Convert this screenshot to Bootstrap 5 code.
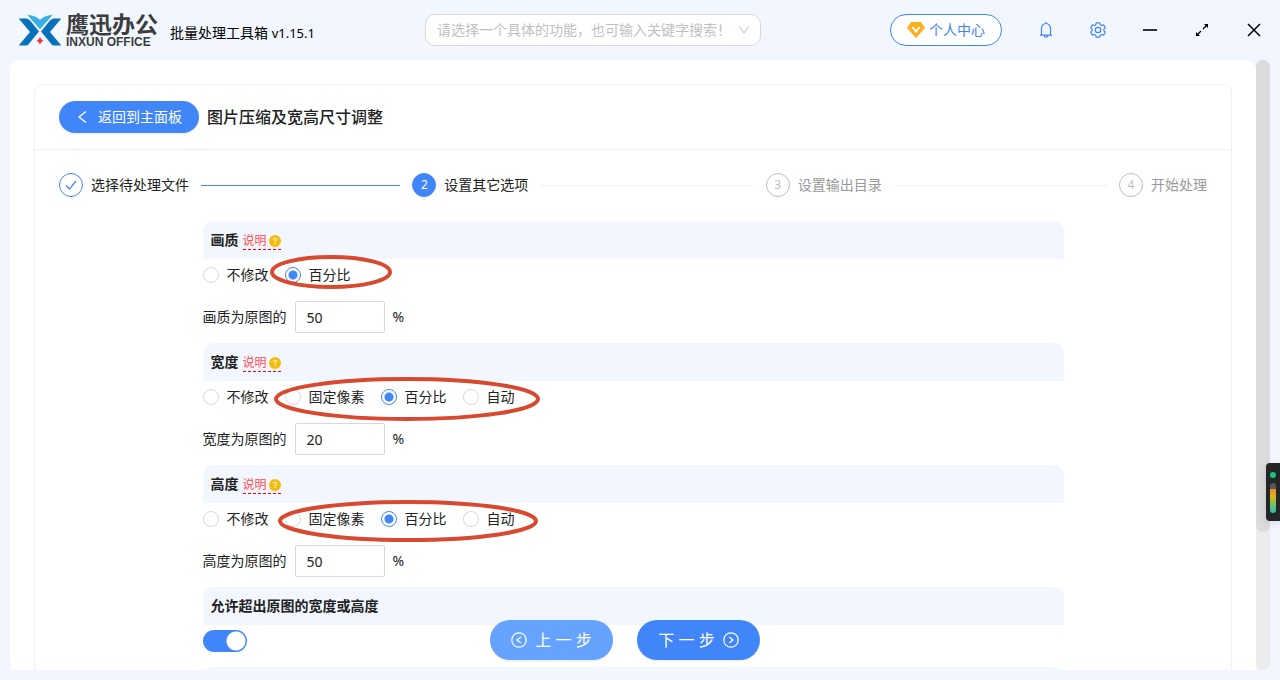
<!DOCTYPE html>
<html lang="zh-CN">
<head>
<meta charset="utf-8">
<meta name="viewport" content="width=device-width, initial-scale=1">
<title>鹰迅办公 批量处理工具箱</title>
<link href="https://cdn.jsdelivr.net/npm/bootstrap@5.3.0/dist/css/bootstrap.min.css" rel="stylesheet">
<style>
:root { --brand: #4086f9; --tint: #f2f7ff; --line: #f0f0f0; }
body { font-family: "Noto Sans", "Noto Sans CJK SC", sans-serif; font-size: 14px; line-height: 22px; color: #222; background: var(--tint); }
button, input, select { font: inherit; }
svg { display: block; flex: none; }

/* top bar */
.topbar { height: 60px; flex: none; }
.brand-area { flex: 0 0 425px; padding-left: 18px; }
.brand-name { font-size: 23px; line-height: 24px; font-weight: 700; color: #3c3c3c; }
.brand-sub { font-family: "Liberation Sans", sans-serif; font-size: 12px; line-height: 12px; font-weight: 700; color: #3c3c3c; }
.app-title { color: #000; margin-left: 10px; margin-top: 6px; }
.app-title span { font-size: 13px; }
.finder { flex: 0 1 336px; }
.finder select { height: 32px; border: 1px solid #d9d9d9; border-radius: 10px; color: #bfbfbf; background: #fff; padding: 0 28px 0 11px; appearance: none; }
.finder svg { right: 11px; top: 10px; pointer-events: none; }
.btn-user { height: 32px; border: 1px solid var(--brand); border-radius: 16px; color: var(--brand); background: #fff; padding: 0 16px; margin-right: 18px; }
.tool { width: 52px; height: 32px; border: 0; background: none; padding: 0; color: #000; }
.tool.tinted { color: var(--brand); }

/* scrolling panel */
.stage { padding: 0 10px 10px; min-height: 0; }
.sheet { background: #fff; border-radius: 10px 10px 0 0; padding: 24px 24px 0; min-width: 0; }
.panel { border: 1px solid var(--line); border-radius: 8px; }
.panel-top { padding: 16px 24px; border-bottom: 1px solid var(--line); }
.panel-main { padding: 23px 24px; }
.panel-title { font-size: 16px; line-height: 24px; font-weight: 500; }
.track { width: 14px; flex: none; background: #ececec; border-radius: 7px; }
.thumb { height: 77.3%; background: #dcdcdc; border-radius: 7px; }
.btn-main { border: 0; color: #fff; background: var(--brand); border-radius: 20px; box-shadow: 0 2px 0 rgba(0,0,0,.045); }
.btn-back { height: 32px; width: 140px; }
.btn-step { height: 40px; width: 123px; font-size: 16px; }
.btn-step.prev { background: #66a3ff; }
.pager { bottom: 20px; gap: 24px; padding-right: 30px; }

/* steps */
.step { gap: 12px; padding-right: 12px; color: #222; }
.step::after { content: ""; flex: 1; height: 1px; background: var(--line); }
.step:last-child { padding-right: 0; }
.step:last-child::after { display: none; }
.step.done::after { background: var(--brand); }
.step.wait { color: #999; }
.step-dot { width: 24px; height: 24px; border: 1px solid #bfbfbf; border-radius: 50%; color: #bfbfbf; }
.step.done .step-dot { border-color: var(--brand); color: var(--brand); }
.step.now .step-dot { border-color: var(--brand); background: var(--brand); color: #fff; }
.step-dot span { font-size: 12px; }

/* option groups */
.group-head { height: 38px; background: var(--tint); border-radius: 10px 10px 0 0; padding: 0 8px; font-weight: 600; gap: 4px; }
.hint { color: #ff4d4f; font-size: 12px; line-height: 16px; font-weight: 400; padding-top: 2px; border-bottom: 1px dashed #f00; text-decoration: none; gap: 2px; }
.line-row { height: 32px; margin-bottom: 10px; gap: 8px; }
.choices { gap: 16px; }
.choice { gap: 8px; }
.choice input { appearance: none; width: 16px; height: 16px; margin: 0; border: 1px solid #d9d9d9; border-radius: 50%; background: #fff; }
.choice input:checked { border-color: var(--brand); background: radial-gradient(circle, var(--brand) 4px, transparent 5px) #fff; }
.num { width: 90px; height: 32px; border: 1px solid #d9d9d9; border-radius: 2px; padding: 0 11px; color: #222; }
.toggle { appearance: none; width: 44px; height: 22px; margin: 0; border-radius: 11px; background: radial-gradient(circle at 33px 11px, #fff 9px, transparent 10px) var(--brand); }
.ring { fill: none; stroke: #d84a2f; stroke-width: 4; }
.ring-svg { pointer-events: none; overflow: visible; left: 0; top: 0; }

/* floating level meter */
.meter { right: 0; top: 463px; width: 14px; height: 58px; background: #242525; border-radius: 4px 0 0 4px; padding: 9px 4px 8px; box-shadow: 0 2px 8px rgba(90,90,180,.2); }
.meter i { width: 6px; height: 6px; border-radius: 50%; background: #14c977; }
.meter b { width: 6px; height: 30px; border-radius: 3px; background: linear-gradient(#55555c 6px, #f0892c 6px, #d9b31d 14px, #6bc06a 22px, #2bb9c4); }
</style>
</head>
<body class="vh-100 overflow-hidden d-flex flex-column">
<header class="topbar d-flex align-items-center">
  <div class="brand-area d-flex align-items-center">
    <svg width="44" height="32" viewBox="0 0 44 32" aria-hidden="true">
      <path fill="#0871b9" d="M.7 4.500H8.500Q11 5 12.500 7L21 17.500L9.500 31.500H.7L12 18Z"/>
      <path fill="#0871b9" d="M43.300 4.500H35.500Q33 5 31.500 7L23 17.500L34.500 31.500H43.300L32 18Z"/>
      <path fill="#35aee2" stroke="#f2f7ff" stroke-width=".6" d="M8.500 .5Q17 .8 22 5.500Q27 .8 35.500 .5Q33 2 31.500 5L22 15.500L12.500 5Q11 2 8.500 .5Z"/>
      <path fill="#e8383d" d="M22 22.500Q22.700 26 26 26.700Q22.700 27.500 22 31Q21.300 27.500 18 26.700Q21.300 26 22 22.500Z"/>
    </svg>
    <div class="ms-1 text-nowrap">
      <div class="brand-name">鹰迅办公</div>
      <div class="brand-sub">INXUN OFFICE</div>
    </div>
    <div class="app-title text-nowrap ms-2 ps-1">批量处理工具箱 <span>v1.15.1</span></div>
  </div>
  <div class="finder position-relative">
    <select class="w-100" aria-label="功能搜索"><option>请选择一个具体的功能，也可输入关键字搜索！</option></select>
    <svg class="position-absolute" width="12" height="12" viewBox="0 0 12 12" fill="none" stroke="#bfbfbf"><path d="M1 2L6 9L11 2"/></svg>
  </div>
  <div class="ms-auto d-flex align-items-center">
    <button class="btn-user d-flex align-items-center gap-1 text-nowrap">
      <svg width="18" height="16" viewBox="0 0 18 16"><path fill="#fdae1c" d="M4 0H14L18 6L9 16L0 6Z"/><path d="M5.500 5L9 9.500L12.500 5" fill="none" stroke="#fff" stroke-width="2"/></svg>
      个人中心
    </button>
    <button class="tool tinted d-flex align-items-center justify-content-center" aria-label="通知">
      <svg width="14" height="16" viewBox="0 0 14 16" fill="none" stroke="currentColor" stroke-width="1.200"><path d="M7 0V1.500M2.500 13V6.500A4.500 5 0 0 1 11.500 6.500V13M1 13.200H13M5 13.500Q5.500 15.200 7 15.200T9 13.500"/></svg>
    </button>
    <button class="tool tinted d-flex align-items-center justify-content-center" aria-label="设置">
      <svg width="16" height="16" viewBox="0 0 16 16" fill="none" stroke="currentColor" stroke-width="1.200" stroke-linejoin="round"><path d="M6.200 .8H9.800L10.300 2.800L11.600 3.500L13.600 2.900L15.300 5.800L13.900 7.200V8.800L15.300 10.200L13.600 13.100L11.600 12.500L10.300 13.200L9.800 15.200H6.200L5.700 13.200L4.400 12.500L2.400 13.100L.7 10.200L2.100 8.800V7.200L.7 5.800L2.400 2.900L4.400 3.500L5.700 2.800Z"/><circle cx="8" cy="8" r="2.700"/></svg>
    </button>
    <button class="tool d-flex align-items-center justify-content-center" aria-label="最小化">
      <svg width="14" height="14" viewBox="0 0 14 14"><path d="M0 7H14" stroke="currentColor" stroke-width="1.600"/></svg>
    </button>
    <button class="tool d-flex align-items-center justify-content-center" aria-label="最大化">
      <svg width="14" height="14" viewBox="0 0 14 14"><path d="M8 6L11.500 2.500M6 8L2.500 11.500" stroke="currentColor" stroke-width="1.300"/><path d="M9 1H13V5ZM1 9V13H5Z"/></svg>
    </button>
    <button class="tool d-flex align-items-center justify-content-center" aria-label="关闭">
      <svg width="14" height="14" viewBox="0 0 14 14"><path d="M1 1L13 13M13 1L1 13" stroke="currentColor" stroke-width="1.500"/></svg>
    </button>
  </div>
</header>

<main class="stage flex-grow-1 d-flex position-relative">
  <div class="sheet flex-grow-1 overflow-hidden">
    <div class="panel">
      <div class="panel-top d-flex align-items-center gap-2">
        <button class="btn-main btn-back d-flex align-items-center justify-content-center gap-2">
          <svg width="14" height="14" viewBox="0 0 14 14" fill="none" stroke="currentColor" stroke-width="1.300"><path d="M10 1.500L3 7L10 12.500"/></svg>
          返回到主面板
        </button>
        <h1 class="panel-title m-0">图片压缩及宽高尺寸调整</h1>
      </div>
      <div class="panel-main">
        <div class="d-flex text-nowrap">
          <div class="step done d-flex align-items-center flex-fill w-25"><div class="d-flex align-items-center gap-2"><div class="step-dot d-flex align-items-center justify-content-center"><svg width="12" height="12" viewBox="0 0 12 12" fill="none" stroke="currentColor" stroke-width="1.200"><path d="M1 6.500L4.500 10L11 2"/></svg></div>选择待处理文件</div></div>
          <div class="step now d-flex align-items-center flex-fill w-25"><div class="d-flex align-items-center gap-2"><div class="step-dot d-flex align-items-center justify-content-center"><span>2</span></div>设置其它选项</div></div>
          <div class="step wait d-flex align-items-center flex-fill w-25"><div class="d-flex align-items-center gap-2"><div class="step-dot d-flex align-items-center justify-content-center"><span>3</span></div>设置输出目录</div></div>
          <div class="step wait d-flex align-items-center"><div class="d-flex align-items-center gap-2"><div class="step-dot d-flex align-items-center justify-content-center"><span>4</span></div>开始处理</div></div>
        </div>

        <form class="w-75 mx-auto mt-4">
          <section>
            <div class="group-head d-flex align-items-center">画质 <a href="#" class="hint d-flex align-items-center">说明<svg width="12" height="12" viewBox="0 0 12 12"><circle cx="6" cy="6" r="6" fill="#f5bd0b"/><path d="M4.300 4.700Q4.300 3.200 6 3.200T7.700 4.600Q7.700 5.400 6 6.100V7" fill="none" stroke="#fff"/><path d="M5.400 8H6.600V9H5.400Z" fill="#fff"/></svg></a></div>
            <div class="line-row choices d-flex align-items-center position-relative">
              <label class="choice d-flex align-items-center"><input type="radio" name="quality">不修改</label>
              <label class="choice d-flex align-items-center"><input type="radio" name="quality" checked>百分比</label>
              <svg class="ring-svg position-absolute" width="340" height="32"><ellipse class="ring" cx="128" cy="13" rx="59" ry="15"/></svg>
            </div>
            <div class="line-row d-flex align-items-center"><label for="q">画质为原图的</label><input class="num" id="q" type="text" value="50">%</div>
          </section>
          <section>
            <div class="group-head d-flex align-items-center">宽度 <a href="#" class="hint d-flex align-items-center">说明<svg width="12" height="12" viewBox="0 0 12 12"><circle cx="6" cy="6" r="6" fill="#f5bd0b"/><path d="M4.300 4.700Q4.300 3.200 6 3.200T7.700 4.600Q7.700 5.400 6 6.100V7" fill="none" stroke="#fff"/><path d="M5.400 8H6.600V9H5.400Z" fill="#fff"/></svg></a></div>
            <div class="line-row choices d-flex align-items-center position-relative">
              <label class="choice d-flex align-items-center"><input type="radio" name="width">不修改</label>
              <label class="choice d-flex align-items-center"><input type="radio" name="width">固定像素</label>
              <label class="choice d-flex align-items-center"><input type="radio" name="width" checked>百分比</label>
              <label class="choice d-flex align-items-center"><input type="radio" name="width">自动</label>
              <svg class="ring-svg position-absolute" width="340" height="32"><ellipse class="ring" cx="204" cy="18" rx="131" ry="20"/></svg>
            </div>
            <div class="line-row d-flex align-items-center"><label for="w">宽度为原图的</label><input class="num" id="w" type="text" value="20">%</div>
          </section>
          <section>
            <div class="group-head d-flex align-items-center">高度 <a href="#" class="hint d-flex align-items-center">说明<svg width="12" height="12" viewBox="0 0 12 12"><circle cx="6" cy="6" r="6" fill="#f5bd0b"/><path d="M4.300 4.700Q4.300 3.200 6 3.200T7.700 4.600Q7.700 5.400 6 6.100V7" fill="none" stroke="#fff"/><path d="M5.400 8H6.600V9H5.400Z" fill="#fff"/></svg></a></div>
            <div class="line-row choices d-flex align-items-center position-relative">
              <label class="choice d-flex align-items-center"><input type="radio" name="height">不修改</label>
              <label class="choice d-flex align-items-center"><input type="radio" name="height">固定像素</label>
              <label class="choice d-flex align-items-center"><input type="radio" name="height" checked>百分比</label>
              <label class="choice d-flex align-items-center"><input type="radio" name="height">自动</label>
              <svg class="ring-svg position-absolute" width="340" height="32"><ellipse class="ring" cx="205" cy="18" rx="128" ry="19"/></svg>
            </div>
            <div class="line-row d-flex align-items-center"><label for="h">高度为原图的</label><input class="num" id="h" type="text" value="50">%</div>
          </section>
          <section>
            <div class="group-head d-flex align-items-center"><label for="over">允许超出原图的宽度或高度</label></div>
            <div class="line-row d-flex align-items-center"><input class="toggle" id="over" type="checkbox" role="switch" checked></div>
          </section>
          <section><div class="group-head"></div></section>
        </form>
      </div>
    </div>
  </div>
  <div class="track"><div class="thumb"></div></div>
  <div class="pager position-absolute start-0 end-0 d-flex justify-content-center">
    <button class="btn-main btn-step prev d-flex align-items-center justify-content-center gap-2">
      <svg width="16" height="16" viewBox="0 0 16 16" fill="none" stroke="currentColor" stroke-width="1.200"><circle cx="8" cy="8" r="7.200"/><path d="M9.800 5L6 8L9.800 11"/></svg>
      <span>上 一 步</span>
    </button>
    <button class="btn-main btn-step d-flex align-items-center justify-content-center gap-2">
      <span>下 一 步</span>
      <svg width="16" height="16" viewBox="0 0 16 16" fill="none" stroke="currentColor" stroke-width="1.200"><circle cx="8" cy="8" r="7.200"/><path d="M6.200 5L10 8L6.200 11"/></svg>
    </button>
  </div>
</main>
<aside class="meter position-fixed d-flex flex-column justify-content-between align-items-center"><i></i><b></b></aside>
<script src="https://cdn.jsdelivr.net/npm/bootstrap@5.3.0/dist/js/bootstrap.bundle.min.js"></script>
</body>
</html>
